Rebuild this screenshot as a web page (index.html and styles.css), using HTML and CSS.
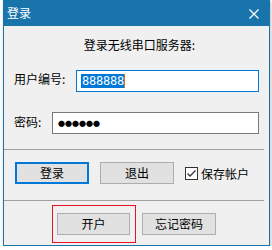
FILE: index.html
```html
<!DOCTYPE html>
<html>
<head>
<meta charset="utf-8">
<link rel="stylesheet" href="styles.css">
</head>
<body>
<div class="window">
  <div class="titlebar">
    <span class="title">登录</span>
    <svg class="close" width="10" height="10" viewBox="0 0 10 10"><path d="M0.5 0.5L9.5 9.5M9.5 0.5L0.5 9.5" stroke="#fff" stroke-width="1.2" fill="none"/></svg>
  </div>
  <div class="content">
    <div class="heading">登录无线串口服务器:</div>
    <div class="row row1">
      <span class="label">用户编号:</span>
      <div class="field focus"><span class="sel">888888</span><span class="caret"></span></div>
    </div>
    <div class="row row2">
      <span class="label">密码:</span>
      <div class="field"><span class="dots">●●●●●●</span></div>
    </div>
    <div class="sep sep1"></div>
    <div class="btnrow">
      <div class="btn default">登录</div>
      <div class="btn">退出</div>
      <div class="check">
        <svg width="13" height="13" viewBox="0 0 13 13"><rect x="0.5" y="0.5" width="12" height="12" fill="#fff" stroke="#333"/><path d="M2.5 6.5L5 9L10.5 3.5" stroke="#333" stroke-width="1.3" fill="none"/></svg>
        <span>保存帐户</span>
      </div>
    </div>
    <div class="sep sep2"></div>
    <div class="btnrow2">
      <div class="mark"><div class="btn">开户</div></div>
      <div class="btn">忘记密码</div>
    </div>
  </div>
</div>
</body>
</html>
```
FILE: styles.css
```css
* { box-sizing: border-box; }
html, body { margin: 0; padding: 0; background: #fff; }
body {
  font-family: "Noto Sans CJK SC", "Microsoft YaHei", sans-serif;
  font-size: 12px;
  color: #000;
}
.window {
  margin-left: 3px;
  width: 267px;
  height: 246px;
  border: 1px solid #1a74ac;
  background: #f0f0f0;
  box-shadow: 1px 1px 4px rgba(0,0,0,0.25);
  display: flex;
  flex-direction: column;
}
.titlebar {
  height: 25px;
  background: #1a74ac;
  color: #fff;
  display: flex;
  align-items: center;
  justify-content: space-between;
  padding: 0 10px 0 3px;
  flex: none;
}
.title { font-size: 12px; line-height: 14px; margin-top: -2px; }
.close { display: block; }
.content { display: flex; flex-direction: column; }
.heading {
  text-align: center;
  line-height: 18px;
  margin-top: 10px;
  padding-left: 6px;
}
.row {
  display: flex;
  align-items: center;
  padding: 0 10px;
  height: 22px;
}
.row1 { margin-top: 16px; }
.row2 { margin-top: 20px; }
.label { line-height: 16px; }
.row1 .label { width: 62px; margin-top: -5px; }
.row2 .label { width: 38px; margin-top: -2px; }
.field {
  flex: 1;
  height: 22px;
  background: #fff;
  border: 1px solid #7a7a7a;
  display: flex;
  align-items: center;
  padding-left: 4px;
}
.field.focus { border-color: #0078d7; }
.sel {
  background: #0078d7;
  color: #fff;
  font-family: "DejaVu Sans Mono", monospace;
  font-size: 12px;
  line-height: 14px;
  letter-spacing: -0.2px;
  padding: 0 0 0 1px;
}
.caret { width: 1px; height: 14px; background: #e07020; }
.dots { font-size: 7px; letter-spacing: 0; color: #000; padding-left: 1px; }
.sep { height: 1px; background: #a0a0a0; margin-right: 5px; }
.sep1 { margin-top: 15px; }
.sep2 { margin-top: 16px; }
.btnrow {
  display: flex;
  align-items: center;
  gap: 11px;
  padding-left: 11px;
  margin-top: 12px;
  height: 22px;
}
.btn {
  width: 74px;
  height: 22px;
  background: #e1e1e1;
  border: 1px solid #adadad;
  display: flex;
  align-items: center;
  justify-content: center;
  line-height: 14px;
  flex: none;
}
.btn.default { border: 2px solid #0078d7; }
.check { display: flex; align-items: center; gap: 3px; }
.check svg { display: block; }
.btnrow2 {
  display: flex;
  align-items: center;
  gap: 6px;
  padding-left: 48px;
  margin-top: 4px;
}
.mark {
  border: 1px solid #e81123;
  width: 84px;
  height: 38px;
  padding: 7px 0 0 4px;
}
.mark .btn { width: 73px; }
```
